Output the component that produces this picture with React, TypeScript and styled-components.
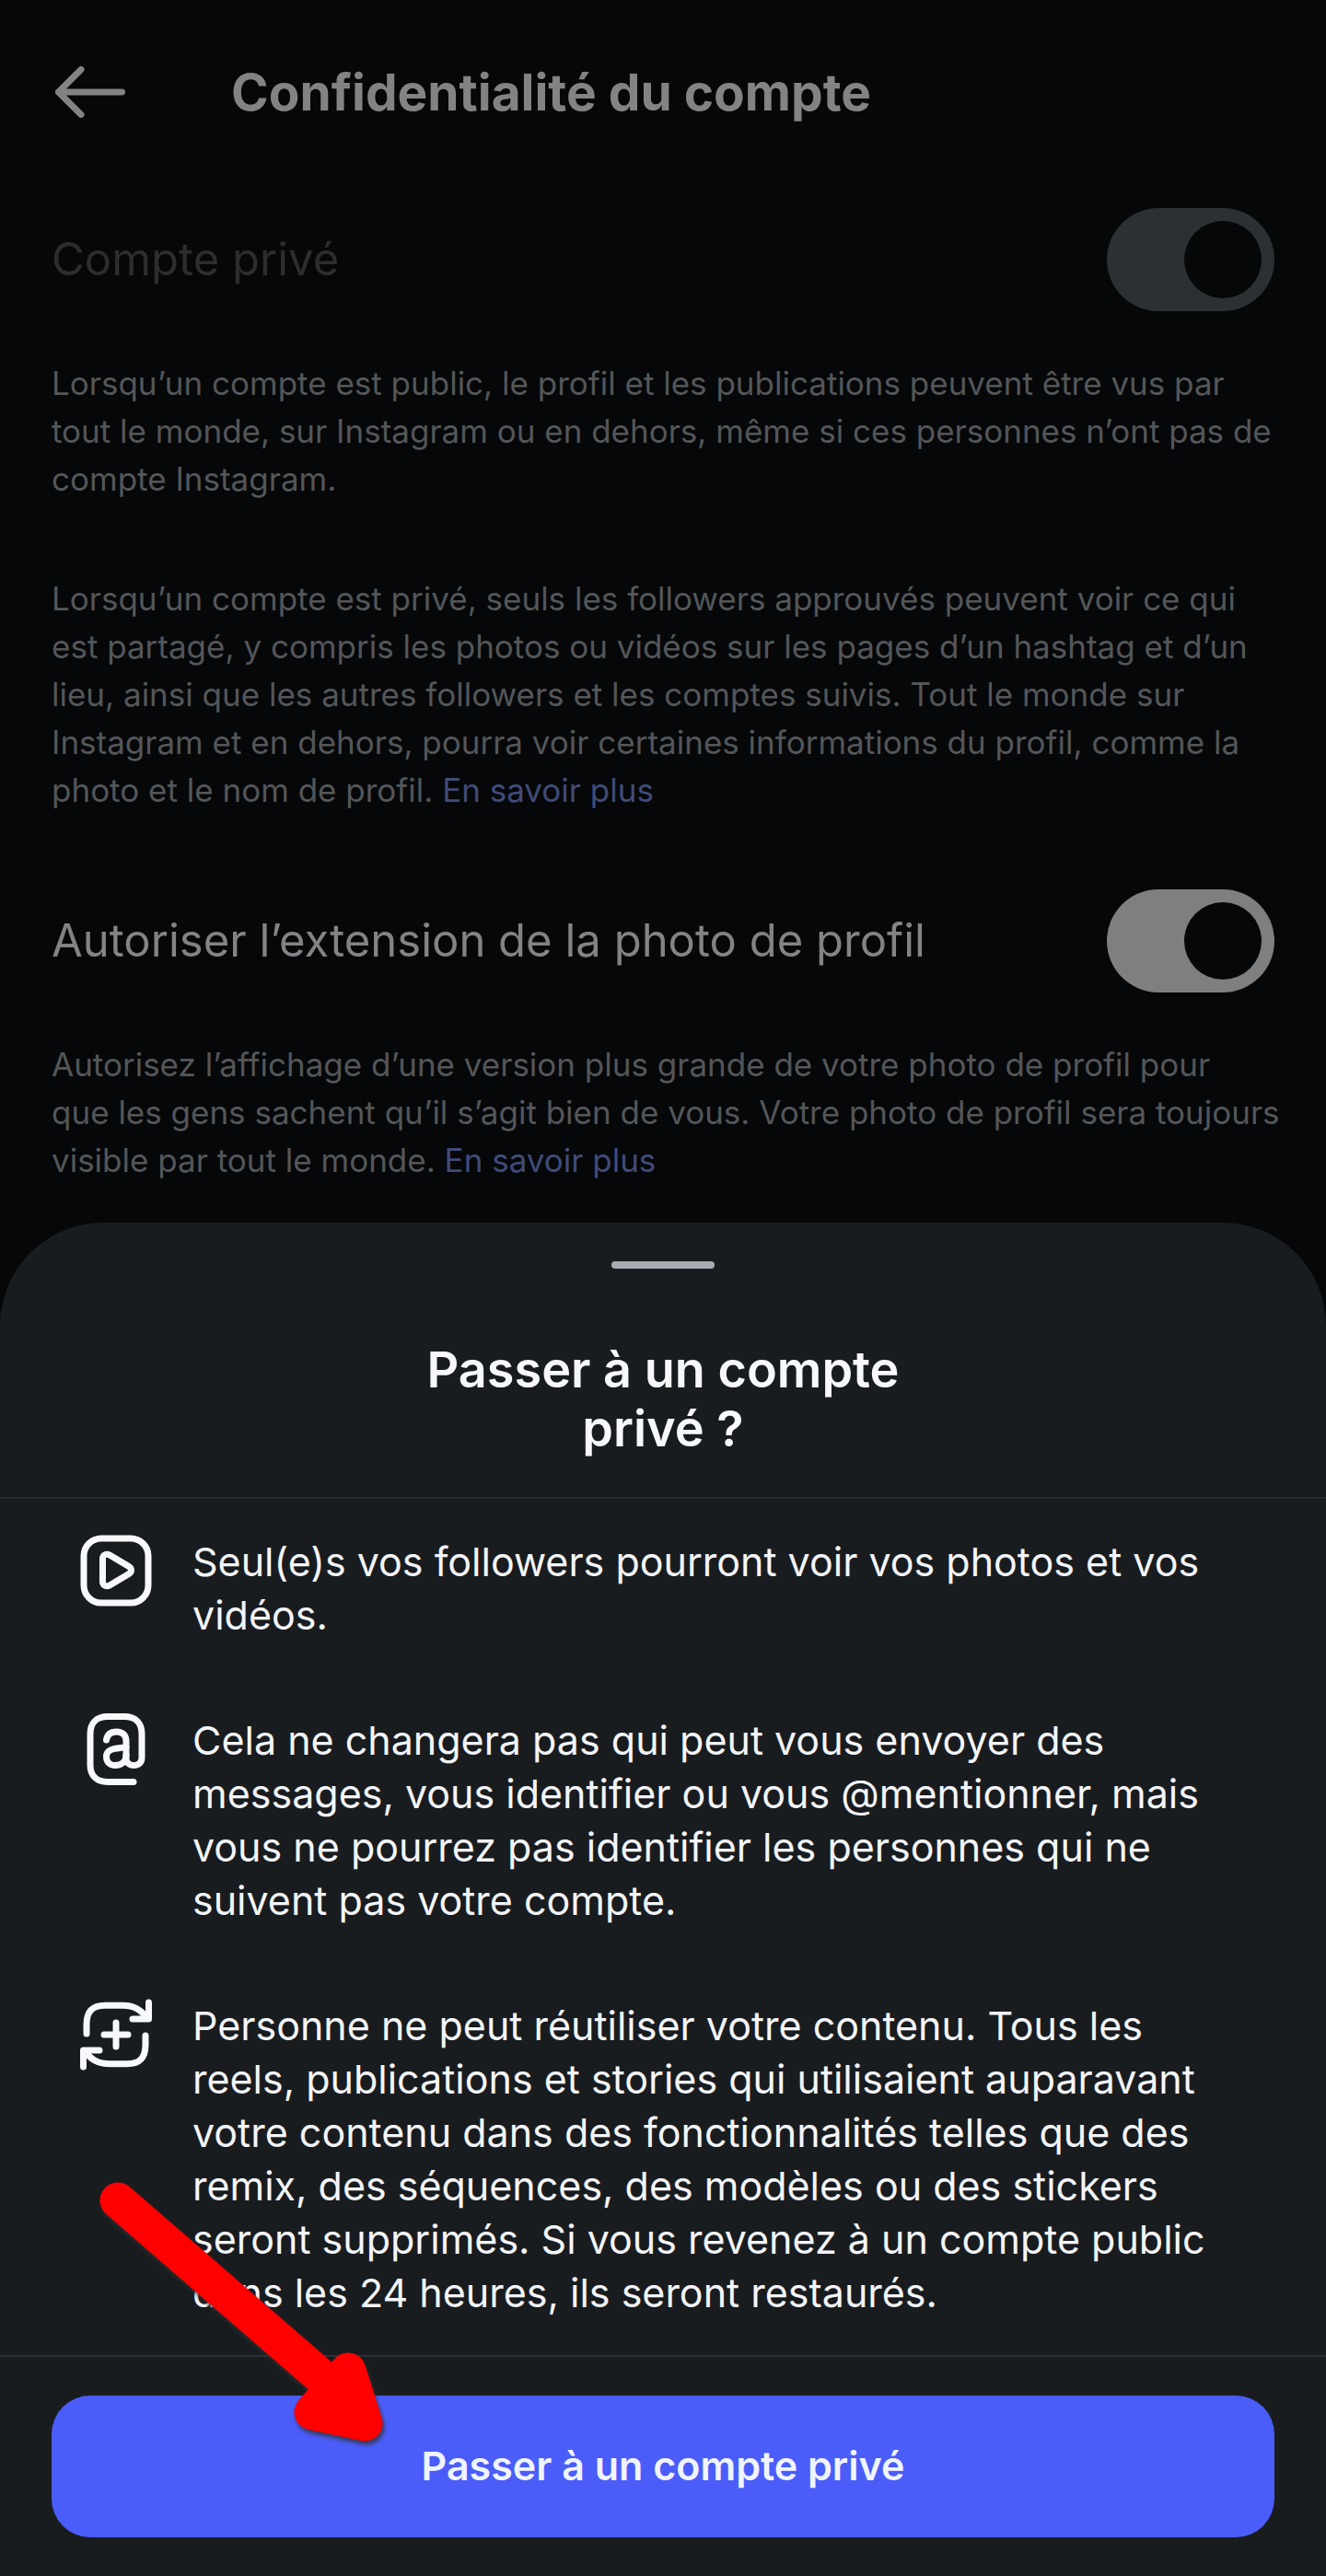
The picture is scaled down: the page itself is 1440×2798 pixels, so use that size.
import React from "react";
import styled, { createGlobalStyle } from "styled-components";

const GlobalStyle = createGlobalStyle`
  *, *::before { box-sizing: border-box; }
  body {
    margin: 0;
    background: #050709;
    font-family: Inter, "Liberation Sans", sans-serif;
  }
  h1, h2, p, ul { margin: 0; padding: 0; }
`;

const Page = styled.div`
  display: flex;
  flex-direction: column;
  min-height: 100vh;
  overflow-x: hidden;
`;

const Settings = styled.main`
  display: flex;
  flex-direction: column;
  padding-bottom: 42px;
`;

const Header = styled.header`
  display: flex;
  align-items: center;
  gap: 115px;
  height: 200px;
  padding: 0 60px;
  margin-bottom: 26px;
`;

const BackButton = styled.button`
  display: flex;
  padding: 0;
  border: 0;
  background: none;
  color: #828384;
  cursor: pointer;
`;

const ScreenTitle = styled.h1`
  font-size: 55px;
  line-height: 64px;
  font-weight: 700;
  color: #828384;
`;

const SettingRow = styled.div`
  display: flex;
  align-items: center;
  justify-content: space-between;
  padding: 0 56px;
`;

const SettingLabel = styled.label<{ $muted?: boolean }>`
  font-size: 49px;
  line-height: 64px;
  color: ${(p) => (p.$muted ? "#2b2d2f" : "#828384")};
`;

const Toggle = styled.input<{ $track: string }>`
  appearance: none;
  display: flex;
  justify-content: flex-start;
  flex: none;
  width: 182px;
  height: 112px;
  margin: 0;
  padding: 14px;
  border-radius: 56px;
  background: ${(p) => p.$track};

  &::before {
    content: "";
    width: 84px;
    height: 84px;
    border-radius: 50%;
    background: #050709;
  }

  &:checked {
    justify-content: flex-end;
  }
`;

const Notes = styled.div`
  display: flex;
  flex-direction: column;
  gap: 78px;
  padding: 52px 40px 0 56px;
`;

const Note = styled.p`
  font-size: 35px;
  line-height: 52px;
  color: #545658;
`;

const NoteLink = styled.a`
  color: #414b78;
  text-decoration: none;
`;

const SecondSetting = styled.section`
  padding-top: 82px;
`;

const Sheet = styled.section`
  position: relative;
  display: flex;
  flex-direction: column;
  flex: 1;
  border-radius: 112px 112px 0 0;
  background: #191c1f;
`;

const SheetHead = styled.div`
  display: flex;
  flex-direction: column;
  align-items: center;
  gap: 78px;
  padding: 42px 56px;
  border-bottom: 2px solid #272b2e;
`;

const Handle = styled.div`
  width: 112px;
  height: 8px;
  border-radius: 4px;
  background: #a8abb4;
`;

const SheetTitle = styled.h2`
  font-size: 54px;
  line-height: 64px;
  font-weight: 600;
  text-align: center;
  color: #f6f8fc;
`;

const Points = styled.ul`
  display: flex;
  flex-direction: column;
  gap: 78px;
  padding: 39px 87px;
  list-style: none;
`;

const Point = styled.li`
  display: flex;
  align-items: flex-start;
  gap: 44px;
  color: #f3f5f9;
`;

const PointIcon = styled.svg`
  flex: none;
  width: 78px;
  height: 78px;
  fill: none;
  stroke: #f6f8fc;
  stroke-width: 7;
  stroke-linecap: round;
  stroke-linejoin: round;
`;

const PointText = styled.p`
  font-size: 43px;
  line-height: 58px;
`;

const SheetFooter = styled.div`
  display: flex;
  padding: 42px 56px;
  border-top: 2px solid #2d3133;
`;

const ConfirmButton = styled.button`
  flex: 1;
  height: 154px;
  padding: 0 0 2px;
  border: 0;
  border-radius: 42px;
  background: #4a5df9;
  color: #f0f4ff;
  font-family: inherit;
  font-size: 43px;
  line-height: 58px;
  font-weight: 600;
  cursor: pointer;
`;

const Pointer = styled.svg`
  position: absolute;
  left: 100px;
  bottom: 128px;
  width: 330px;
  height: 310px;
  pointer-events: none;
  filter: drop-shadow(2px 4px 2px rgba(50, 50, 50, 0.8));
`;

function PlayIcon() {
  return (
    <PointIcon viewBox="0 0 78 78" aria-hidden="true">
      <rect x="4" y="4" width="70" height="70" rx="19" />
      <path d="M24.5 26 V51 C24.5 55 28.5 57 32 55 L53 42.5 C56.3 40.5 56.3 36.5 53 34.5 L32 22 C28.5 20 24.5 22 24.5 26 Z" />
    </PointIcon>
  );
}

function MentionIcon() {
  return (
    <PointIcon viewBox="0 0 78 78" aria-hidden="true">
      <path d="M58 74.5 H30 C18 74.5 11 67.5 11 56 V22 C11 10.5 18 3.5 30 3.5 H48 C60 3.5 67 10.5 67 22 V48 C67 53.5 63.5 56.5 58.5 56.5 C53.5 56.5 50 53.5 50 49 V30 C50 23.5 46 20 39.5 20 C34 20 29.5 22.5 28.5 29" />
      <path d="M50 36.5 C44 38.5 28.5 36.5 28.5 47 C28.5 53 32.5 56.5 38 56.5 C45 56.5 50 52 50 45" />
    </PointIcon>
  );
}

function RemixIcon() {
  return (
    <PointIcon viewBox="0 0 78 78" aria-hidden="true">
      <path d="M7 38 V28 C7 13 14 7.3 27 7.3 H46 C58 7.3 65 11 72 20" />
      <path d="M74.5 4 V22 H57" />
      <path d="M71 40 V50 C71 65 64 70.7 51 70.7 H32 C20 70.7 13 67 6 58" />
      <path d="M3.5 74 V56 H21" />
      <path d="M39 26 V52 M26 39 H52" />
    </PointIcon>
  );
}

export default function App() {
  return (
    <>
      <GlobalStyle />
      <Page>
        <Settings>
          <Header>
            <BackButton type="button" aria-label="Retour">
              <svg width="76" height="56" viewBox="0 0 76 56" fill="none" stroke="currentColor" strokeWidth="7" strokeLinecap="round" strokeLinejoin="round">
                <path d="M28 3.5 L3.5 28 L28 52.5 M3.5 28 H72.5" />
              </svg>
            </BackButton>
            <ScreenTitle>Confidentialité du compte</ScreenTitle>
          </Header>

          <section>
            <SettingRow>
              <SettingLabel htmlFor="private" $muted>Compte privé</SettingLabel>
              <Toggle id="private" type="checkbox" role="switch" defaultChecked disabled $track="#2b3033" />
            </SettingRow>
            <Notes>
              <Note>
                Lorsqu’un compte est public, le profil et les publications peuvent être vus par<br />
                tout le monde, sur Instagram ou en dehors, même si ces personnes n’ont pas de<br />
                compte Instagram.
              </Note>
              <Note>
                Lorsqu’un compte est privé, seuls les followers approuvés peuvent voir ce qui<br />
                est partagé, y compris les photos ou vidéos sur les pages d’un hashtag et d’un<br />
                lieu, ainsi que les autres followers et les comptes suivis. Tout le monde sur<br />
                Instagram et en dehors, pourra voir certaines informations du profil, comme la<br />
                photo et le nom de profil. <NoteLink href="#profil">En savoir plus</NoteLink>
              </Note>
            </Notes>
          </section>

          <SecondSetting>
            <SettingRow>
              <SettingLabel htmlFor="expand">Autoriser l’extension de la photo de profil</SettingLabel>
              <Toggle id="expand" type="checkbox" role="switch" defaultChecked $track="#7f7f7f" />
            </SettingRow>
            <Notes>
              <Note>
                Autorisez l’affichage d’une version plus grande de votre photo de profil pour<br />
                que les gens sachent qu’il s’agit bien de vous. Votre photo de profil sera toujours<br />
                visible par tout le monde. <NoteLink href="#photo">En savoir plus</NoteLink>
              </Note>
            </Notes>
          </SecondSetting>
        </Settings>

        <Sheet role="dialog" aria-labelledby="sheet-title">
          <SheetHead>
            <Handle />
            <SheetTitle id="sheet-title">
              Passer à un compte<br />
              privé ?
            </SheetTitle>
          </SheetHead>
          <Points>
            <Point>
              <PlayIcon />
              <PointText>
                Seul(e)s vos followers pourront voir vos photos et vos<br />
                vidéos.
              </PointText>
            </Point>
            <Point>
              <MentionIcon />
              <PointText>
                Cela ne changera pas qui peut vous envoyer des<br />
                messages, vous identifier ou vous @mentionner, mais<br />
                vous ne pourrez pas identifier les personnes qui ne<br />
                suivent pas votre compte.
              </PointText>
            </Point>
            <Point>
              <RemixIcon />
              <PointText>
                Personne ne peut réutiliser votre contenu. Tous les<br />
                reels, publications et stories qui utilisaient auparavant<br />
                votre contenu dans des fonctionnalités telles que des<br />
                remix, des séquences, des modèles ou des stickers<br />
                seront supprimés. Si vous revenez à un compte public<br />
                dans les 24 heures, ils seront restaurés.
              </PointText>
            </Point>
          </Points>
          <SheetFooter>
            <ConfirmButton type="button">Passer à un compte privé</ConfirmButton>
          </SheetFooter>
          <Pointer viewBox="0 0 330 310" aria-hidden="true">
            <g stroke="#ff0000" strokeWidth="39" strokeLinecap="round" strokeLinejoin="round" fill="#ff0000">
              <path d="M28 30 L270 240" />
              <path d="M278 215 L296 272 L239 260 Z" />
            </g>
          </Pointer>
        </Sheet>
      </Page>
    </>
  );
}
